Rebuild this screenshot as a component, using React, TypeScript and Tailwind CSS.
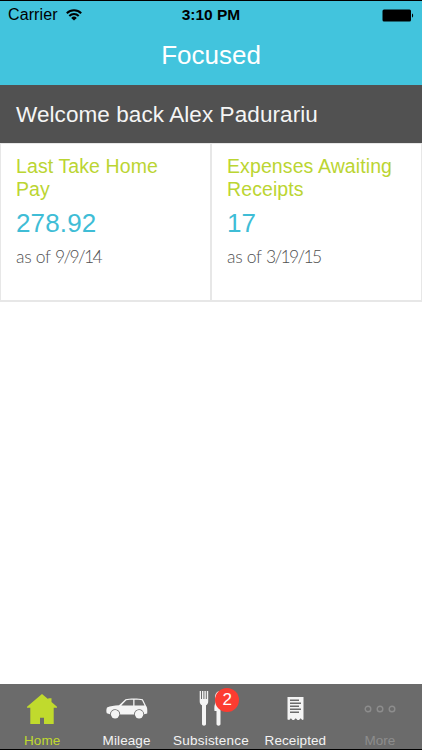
import type { ReactNode } from 'react';

type Card = {
  title: string;
  value: string;
  date: string;
};

type Tab = {
  label: string;
  icon: ReactNode;
  color: string;
  tracking: string;
  badge?: number;
};

const cards: Card[] = [
  { title: 'Last Take Home Pay', value: '278.92', date: '9/9/14' },
  { title: 'Expenses Awaiting Receipts', value: '17', date: '3/19/15' },
];

const HomeIcon = () => (
  <svg width="32" height="30" viewBox="0 0 32 30" fill="currentColor">
    <path d="M16 0 22.300 5.300V4.300h3.200v3.700L31 12.800v1h-3.300V30H18v-6.300h-4V30H4.300V13.800H1v-1z" />
  </svg>
);

const CarIcon = () => (
  <svg width="42" height="21" viewBox="0 0 42 21">
    <path
      fill="currentColor"
      fillRule="evenodd"
      d="M1 9.500C4.500 8 8 7.600 13 7.300L19.500 1.200C23 .2 33 .2 36.800 1.200l3.200 6.500c1.300 1 1.500 4.500 1.200 7.800l-3 .8A5.100 5.100 0 0 0 28 16.500H14.200A5.100 5.100 0 0 0 4 16.200L.8 15.300C.2 13.500.2 11.500 1 9.500zM20.300 2.300 15.300 7.500H27.200V1.800c-2.400 0-5 .1-6.900.5zM28.500 1.800V7.500h10l-2.500-5.200c-2-.4-5-.5-7.500-.5z"
    />
    <circle cx="9.100" cy="16.200" r="4.200" fill="currentColor" />
    <circle cx="33.100" cy="16.200" r="4.200" fill="currentColor" />
  </svg>
);

const CutleryIcon = () => (
  <svg width="24" height="35" viewBox="0 0 24 35" fill="currentColor">
    <path d="M.7 0h1.300v8h1V0h1.400v8h1V0h1.400v8h1V0h1.400v10.500c0 2-.8 3-2.200 3.800V33c0 2.200-4 2.200-4 0V14.300C1.500 13.500.7 12.500.7 10.500z" />
    <path d="M21.500 0c-4 0-5.500 3-5.500 7 0 2 1 3.500 0 6-.8 2.300-.8 4.500-.5 7h2V33c0 2.200 4 2.200 4 0z" />
  </svg>
);

const ReceiptIcon = () => (
  <svg width="17" height="24" viewBox="0 0 17 24">
    <path fill="currentColor" d="M.5 0h16v22.500l-1.300.5-1.500-1.700-1.700 1.700h-1.500L8.700 21.300 7 23H5.500L3.900 21.300 2.200 23 .5 22.500z" />
    <path stroke="#6b6b6b" strokeWidth="1.400" d="M3 3.200h9M3 6.200h11M3 9.200h9M3 12.200h11M3 15.200h9" />
  </svg>
);

const MoreIcon = () => (
  <svg width="32" height="8" viewBox="0 0 32 8" fill="none" stroke="currentColor" strokeWidth="1.400">
    <circle cx="4" cy="4" r="2.800" />
    <circle cx="16" cy="4" r="2.800" />
    <circle cx="28" cy="4" r="2.800" />
  </svg>
);

const WifiIcon = () => (
  <svg width="16" height="12" viewBox="0 0 16 12" fill="none" stroke="black" strokeWidth="2">
    <path d="M.8 4.300a10.200 10.200 0 0 1 14.400 0M3.300 7a6.600 6.600 0 0 1 9.400 0" />
    <path fill="black" stroke="none" d="M8 11.500 5.200 8.900a4 4 0 0 1 5.600 0z" />
  </svg>
);

const BatteryIcon = () => (
  <svg width="32" height="13" viewBox="0 0 32 13">
    <rect x=".5" y=".5" width="28.500" height="12" rx="1.500" />
    <path d="M30 4.500c1.500.3 1.500 3.700 0 4z" />
  </svg>
);

const tabs: Tab[] = [
  { label: 'Home', icon: <HomeIcon />, color: 'text-[#c0da2d]', tracking: 'tracking-[0.1px]' },
  { label: 'Mileage', icon: <CarIcon />, color: 'text-[#f4f4f4]', tracking: 'tracking-[0.1px]' },
  { label: 'Subsistence', icon: <CutleryIcon />, color: 'text-[#f4f4f4]', tracking: 'tracking-[0.2px]', badge: 2 },
  { label: 'Receipted', icon: <ReceiptIcon />, color: 'text-[#f4f4f4]', tracking: 'tracking-[0.1px]' },
  { label: 'More', icon: <MoreIcon />, color: 'text-[#8d8d8d]', tracking: 'tracking-[0px]' },
];

export default function App() {
  return (
    <div className="flex h-screen w-full flex-col overflow-hidden border-y border-black bg-white font-['Liberation_Sans',Arial,sans-serif]">
      <header className="h-[84px] shrink-0 bg-[#42c4dd]">
        {/* Status bar */}
        <div className="grid h-[28px] grid-cols-3 items-center pr-[8px] pl-[8px] text-[16px] text-black">
          <div className="flex items-center gap-[8px]">
            <span className="tracking-[0.1px]">Carrier</span>
            <WifiIcon />
          </div>
          <span className="text-center text-[15.5px] font-bold">3:10 PM</span>
          <div className="flex justify-end">
            <BatteryIcon />
          </div>
        </div>
        <h1 className="text-center text-[26px] leading-[53px] text-white">Focused</h1>
      </header>

      <div className="flex h-[58px] shrink-0 items-center bg-[#515151] px-4 pt-[2px] text-[22.5px] tracking-[0.08px] text-[#f5f5f5]">
        Welcome back Alex Padurariu
      </div>

      <main className="grid flex-1 grid-cols-2 items-start">
        {cards.map((card) => (
          <section key={card.title} className="h-[159px] border border-b-2 border-[#e7e7e7] px-[15px] pt-[11px]">
            <h2 className="text-[19.5px] leading-[22.5px] tracking-[0.1px] text-[#bbd532]">{card.title}</h2>
            <p className="mt-[7px] text-[26px] leading-[32px] tracking-[0.15px] text-[#3fbdd6]">{card.value}</p>
            <p className="mt-[7px] font-['Lato',sans-serif] text-[17.5px] leading-[22px] font-light text-[#505050]">
              <span className="tracking-[-0.3px]">as of </span>
              <span className="tracking-[-1.6px]">{card.date}</span>
            </p>
          </section>
        ))}
      </main>

      <nav className="grid h-[65px] shrink-0 grid-cols-5 bg-[#6b6b6b]">
        {tabs.map((tab) => (
          <div key={tab.label} className={`flex flex-col items-center ${tab.color}`}>
            <div className="relative flex h-[49px] w-full items-center justify-center">
              {tab.icon}
              {tab.badge && (
                <span className="absolute top-[4px] left-[46.5px] flex size-[24px] items-center justify-center rounded-full bg-[#fc3c31] text-[17px] text-white">
                  {tab.badge}
                </span>
              )}
            </div>
            <span className={`text-[13.5px] leading-[16px] ${tab.tracking}`}>{tab.label}</span>
          </div>
        ))}
      </nav>
    </div>
  );
}
